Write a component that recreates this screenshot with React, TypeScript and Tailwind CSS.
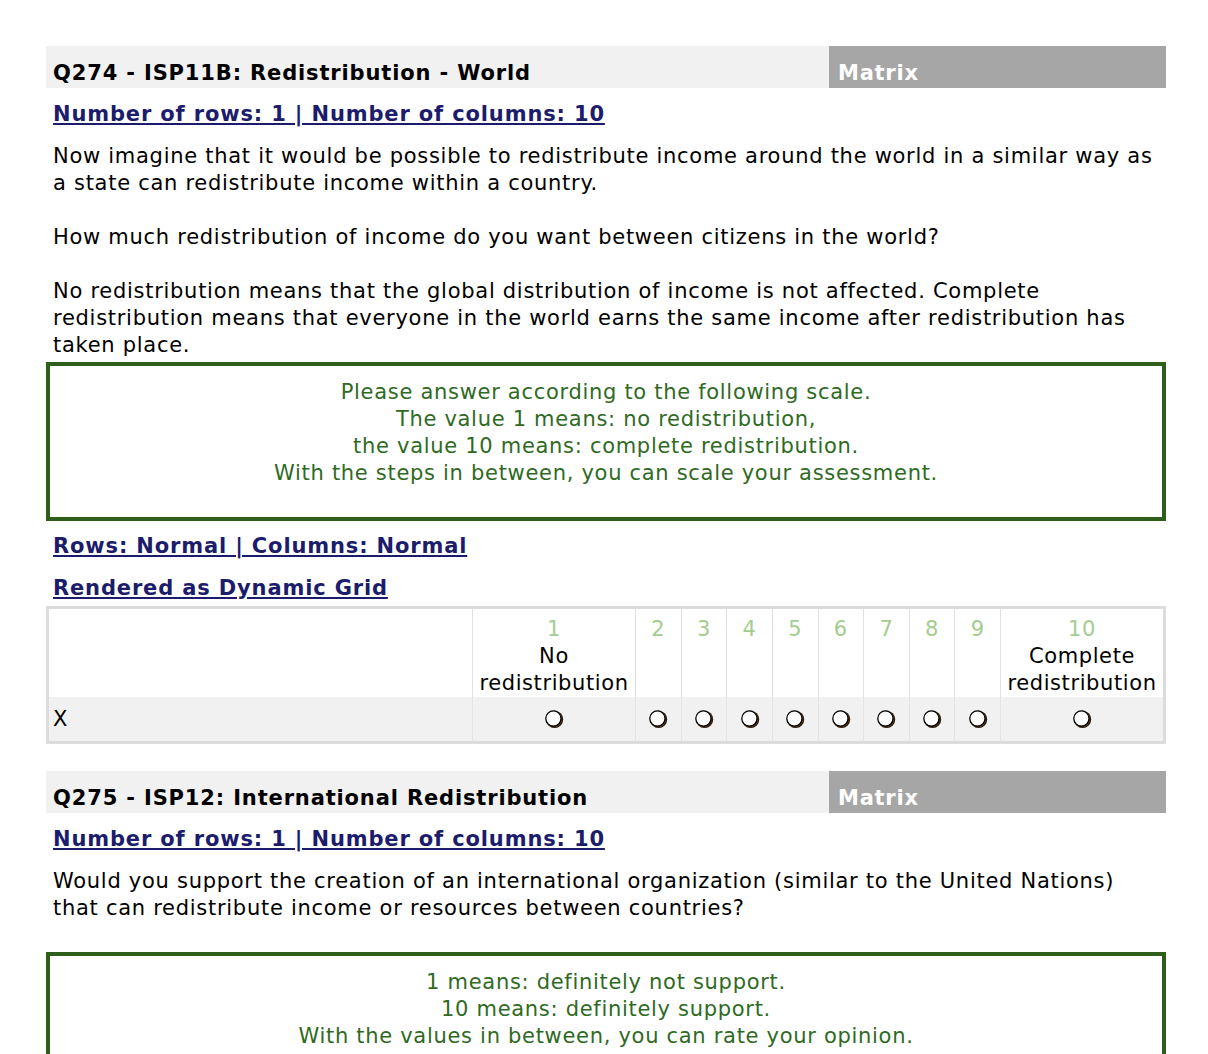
const FONT = { fontFamily: '"DejaVu Sans", Verdana, sans-serif' };

interface Question {
  title: string;
  paragraphs: string[];
  scale: string[];
  showGrid: boolean;
  trailingBreak: boolean;
}

const QUESTIONS: Question[] = [
  {
    title: "Q274 - ISP11B: Redistribution - World",
    paragraphs: [
      "Now imagine that it would be possible to redistribute income around the world in a similar way as a state can redistribute income within a country.",
      "How much redistribution of income do you want between citizens in the world?",
      "No redistribution means that the global distribution of income is not affected. Complete redistribution means that everyone in the world earns the same income after redistribution has taken place.",
    ],
    scale: [
      "Please answer according to the following scale.",
      "The value 1 means: no redistribution,",
      "the value 10 means: complete redistribution.",
      "With the steps in between, you can scale your assessment.",
    ],
    showGrid: true,
    trailingBreak: false,
  },
  {
    title: "Q275 - ISP12: International Redistribution",
    paragraphs: [
      "Would you support the creation of an international organization (similar to the United Nations) that can redistribute income or resources between countries?",
    ],
    scale: [
      "1 means: definitely not support.",
      "10 means: definitely support.",
      "With the values in between, you can rate your opinion.",
    ],
    showGrid: false,
    trailingBreak: true,
  },
];

// old-style radio button: circle with a dark crescent shadow at bottom right
function Radio() {
  return (
    <svg width="22" height="22" viewBox="0 0 22 22">
      <circle cx="11.6" cy="11.4" r="8.6" fill="#1a1208" />
      <circle cx="11.2" cy="11.1" r="8.4" fill="#b8651c" opacity="0.35" />
      <circle cx="10.4" cy="10.5" r="7.6" fill="#fff" stroke="#000" strokeWidth="1.3" />
    </svg>
  );
}

function Grid() {
  const cols = [
    { n: "1", label: ["No", "redistribution"] },
    ...["2", "3", "4", "5", "6", "7", "8", "9"].map((n) => ({ n, label: [] as string[] })),
    { n: "10", label: ["Complete", "redistribution"] },
  ];
  return (
    <div className="border-[3px] border-[#dcdcdc]">
      <div className="grid grid-cols-[423px_163px_repeat(8,1fr)_163px] text-[21px] leading-[27px] tracking-[0.6px]">
        <div className="bg-white" />
        {cols.map((c) => (
          <div key={c.n} className="flex flex-col items-center border-l border-[#e0e0e0] bg-white pt-[7px] pb-0 text-center">
            <span className="text-[#a3cd8f]">{c.n}</span>
            {c.label.map((l) => (
              <span key={l} className="text-black">{l}</span>
            ))}
          </div>
        ))}
        <div className="flex h-[44px] items-center bg-[#f1f1f1] pl-[4px] text-black">X</div>
        {cols.map((c) => (
          <div key={c.n} className="flex h-[44px] items-center justify-center border-l border-[#e4e4e4] bg-[#f1f1f1]">
            <Radio />
          </div>
        ))}
      </div>
    </div>
  );
}

function QuestionBlock({ q }: { q: Question }) {
  return (
    <section className="flex flex-col">
      <div className="flex h-[42px]">
        <div className="flex flex-1 items-end bg-[#f1f1f1] pb-[1px] pl-[7px] text-[21px] font-bold leading-[27px] tracking-[0.85px] text-black">
          {q.title}
        </div>
        <div className="flex w-[337px] items-end bg-[#a6a6a6] pb-[1px] pl-[9px] text-[21px] font-bold leading-[27px] tracking-[0.75px] text-white">
          Matrix
        </div>
      </div>
      <a className="mt-[13px] ml-[7px] self-start text-[21px] font-bold leading-[27px] tracking-[0.85px] text-[#1c1c6c] underline">
        Number of rows: 1 | Number of columns: 10
      </a>
      <div className="mt-[15px] ml-[7px] mr-[10px] flex flex-col gap-[27px] text-[21px] leading-[27px] tracking-[0.72px] text-black">
        {q.paragraphs.map((p) => (
          <p key={p}>{p}</p>
        ))}
        {q.trailingBreak && <div className="-mt-[27px] h-[27px]" />}
      </div>
      <div className="mt-[3px] flex flex-col items-center border-4 border-[#2d5e1a] pt-[13px] pb-[30px] text-center text-[21px] leading-[27px] tracking-[0.7px] text-[#2f6a1f]">
        {q.scale.map((s) => (
          <span key={s}>{s}</span>
        ))}
      </div>
      {q.showGrid && (
        <>
          <a className="mt-[12px] ml-[7px] self-start text-[21px] font-bold leading-[27px] tracking-[0.85px] text-[#1c1c6c] underline">
            Rows: Normal | Columns: Normal
          </a>
          <a className="mt-[15px] ml-[7px] self-start text-[21px] font-bold leading-[27px] tracking-[0.85px] text-[#1c1c6c] underline">
            Rendered as Dynamic Grid
          </a>
          <div className="mt-[4px]">
            <Grid />
          </div>
        </>
      )}
    </section>
  );
}

export default function App() {
  return (
    <div className="min-h-screen bg-white" style={FONT}>
      <div className="ml-[46px] flex w-[1120px] flex-col gap-[27px] pt-[46px]">
        {QUESTIONS.map((q) => (
          <QuestionBlock key={q.title} q={q} />
        ))}
      </div>
    </div>
  );
}
